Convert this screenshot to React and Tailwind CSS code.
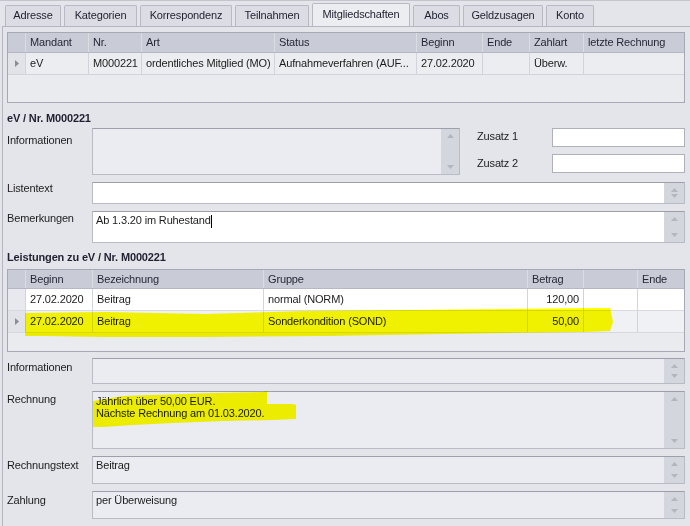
import React from "react";

const Up = () => (
  <svg width="7" height="4" viewBox="0 0 7 4"><path d="M3.5 0 L7 4 L0 4 Z" fill="#b4b6bf" /></svg>
);
const Down = () => (
  <svg width="7" height="4" viewBox="0 0 7 4"><path d="M0 0 L7 0 L3.5 4 Z" fill="#b4b6bf" /></svg>
);

function Scroll({ w = "w-[20px]" }) {
  return (
    <div className={`${w} shrink-0 bg-[#d4d6de] flex flex-col justify-between items-center py-[5px]`}>
      <Up />
      <Down />
    </div>
  );
}

function Box({ h, white, scroll = true, text, scrollW }) {
  return (
    <div
      className={`flex flex-1 border border-[#babcc5] border-t-[#9d9faa] ${h} ${white ? "bg-white" : "bg-[#ebecf1]"}`}
    >
      <div className="flex-1 pl-[3px] pt-[1px] text-[11px] leading-[13px] text-[#1c1c1c]">{text}</div>
      {scroll && <Scroll w={scrollW} />}
    </div>
  );
}

function Row({ label, labelPt, mt, children }) {
  return (
    <div className={`flex ${mt}`}>
      <div className={`w-[85px] shrink-0 ${labelPt} text-[11px] leading-[13px] text-[#1c1c1c]`}>{label}</div>
      {children}
    </div>
  );
}

const Arrow = () => (
  <svg width="4" height="7" viewBox="0 0 4 7"><path d="M0 0 L4 3.5 L0 7 Z" fill="#8a8c96" /></svg>
);

const tabs = [
  ["Adresse", "w-[56px]"],
  ["Kategorien", "w-[73px]"],
  ["Korrespondenz", "w-[92px]"],
  ["Teilnahmen", "w-[74px]"],
  ["Mitgliedschaften", "w-[98px]"],
  ["Abos", "w-[47px]"],
  ["Geldzusagen", "w-[80px]"],
  ["Konto", "w-[48px]"],
];

function Cell({ w, children, right, cls = "" }) {
  return (
    <div
      className={`${w} shrink-0 border-r border-[#d2d4db] px-[4px] overflow-hidden whitespace-nowrap flex items-center ${right ? "justify-end" : ""} ${cls}`}
    >
      {children}
    </div>
  );
}

export default function App() {
  return (
    <div className="w-[690px] h-[526px] bg-[#e4e5eb] overflow-hidden relative [font-family:'Liberation_Sans',Arial,sans-serif] text-[11px] tracking-[-0.15px] text-[#1c1c1c] border-t border-[#c3c5cc]">
      {/* Tabs */}
      <div className="flex items-end h-[25px] pl-[5px] gap-[3px]">
        {tabs.map(([t, w]) => {
          const active = t === "Mitgliedschaften";
          return (
            <div
              key={t}
              className={`${w} ${active ? "h-[23px] bg-[#ecedf1]" : "h-[21px] bg-[#dcdde4]"} border border-b-0 border-[#b8bac3] rounded-t-[2px] flex items-center justify-center text-[#1d1f2e] leading-none pb-[1px]`}
            >
              {t}
            </div>
          );
        })}
      </div>

      {/* Panel */}
      <div className="ml-[2px] border-l border-t border-[#b4b6c0] pl-[4px] pr-[5px] pt-[5px] h-[501px]">
        {/* Top grid */}
        <div className="h-[71px] border border-[#a6a8b3] bg-[#eaebef] flex flex-col">
          <div className="flex h-[20px] bg-[#c9cbd6] border-b border-[#b5b7c2] text-[#262838]">
            <Cell w="w-[18px]" cls="border-[#dcdde3]" />
            <Cell w="w-[63px]" cls="border-[#dcdde3]">Mandant</Cell>
            <Cell w="w-[53px]" cls="border-[#dcdde3]">Nr.</Cell>
            <Cell w="w-[133px]" cls="border-[#dcdde3]">Art</Cell>
            <Cell w="w-[142px]" cls="border-[#dcdde3]">Status</Cell>
            <Cell w="w-[66px]" cls="border-[#dcdde3]">Beginn</Cell>
            <Cell w="w-[47px]" cls="border-[#dcdde3]">Ende</Cell>
            <Cell w="w-[54px]" cls="border-[#dcdde3]">Zahlart</Cell>
            <div className="flex-1 px-[4px] flex items-center">letzte Rechnung</div>
          </div>
          <div className="flex h-[22px] bg-[#ecedf1] border-b border-[#d2d4db]">
            <Cell w="w-[18px]" cls="justify-center bg-[#e2e3e9]"><Arrow /></Cell>
            <Cell w="w-[63px]">eV</Cell>
            <Cell w="w-[53px]">M000221</Cell>
            <Cell w="w-[133px]">ordentliches Mitglied (MO)</Cell>
            <Cell w="w-[142px]">Aufnahmeverfahren (AUF...</Cell>
            <Cell w="w-[66px]">27.02.2020</Cell>
            <Cell w="w-[47px]" />
            <Cell w="w-[54px]">Überw.</Cell>
            <div className="flex-1" />
          </div>
        </div>

        {/* Section title */}
        <div className="mt-[7px] h-[16px] flex items-center font-bold text-[#1f2130]">eV / Nr. M000221</div>

        {/* Informationen + Zusatz */}
        <div className="flex mt-[2px]">
          <div className="w-[85px] shrink-0 pt-[4px]">Informationen</div>
          <div className="w-[368px] shrink-0 flex">
            <Box h="h-[47px]" scrollW="w-[18px]" />
          </div>
          <div className="flex-1 flex flex-col gap-[7px] pl-[17px]">
            <div className="flex h-[19px] items-center">
              <div className="w-[75px] shrink-0 pb-[3px]">Zusatz 1</div>
              <div className="flex-1 h-[19px] bg-white border border-[#aeb0ba]" />
            </div>
            <div className="flex h-[19px] items-center">
              <div className="w-[75px] shrink-0">Zusatz 2</div>
              <div className="flex-1 h-[19px] bg-white border border-[#aeb0ba]" />
            </div>
          </div>
        </div>

        <Row label="Listentext" labelPt="pt-[0px]" mt="mt-[7px]">
          <Box h="h-[22px]" white />
        </Row>
        <Row label="Bemerkungen" labelPt="pt-[1px]" mt="mt-[7px]">
          <Box
            h="h-[32px]"
            white
            text={
              <span className="inline-block pt-[1px]">
                Ab 1.3.20 im Ruhestand<span className="inline-block w-[1px] h-[13px] bg-black align-middle" />
              </span>
            }
          />
        </Row>

        <div className="mt-[6px] h-[16px] flex items-center font-bold text-[#1f2130]">Leistungen zu eV / Nr. M000221</div>

        {/* Lower grid */}
        <div className="relative mt-[4px] h-[83px] border border-[#a6a8b3] bg-[#eaebef] flex flex-col">
          <div className="flex h-[19px] bg-[#c9cbd6] border-b border-[#b5b7c2] text-[#262838]">
            <Cell w="w-[18px]" cls="border-[#dcdde3]" />
            <Cell w="w-[67px]" cls="border-[#dcdde3]">Beginn</Cell>
            <Cell w="w-[171px]" cls="border-[#dcdde3]">Bezeichnung</Cell>
            <Cell w="w-[264px]" cls="border-[#dcdde3]">Gruppe</Cell>
            <Cell w="w-[56px]" cls="border-[#dcdde3]">Betrag</Cell>
            <Cell w="w-[54px]" cls="border-[#dcdde3]" />
            <div className="flex-1 px-[4px] flex items-center">Ende</div>
          </div>
          <div className="flex h-[22px] bg-white border-b border-[#d8d9df]">
            <Cell w="w-[18px]" cls="bg-[#e8e9ee]" />
            <Cell w="w-[67px]">27.02.2020</Cell>
            <Cell w="w-[171px]">Beitrag</Cell>
            <Cell w="w-[264px]">normal (NORM)</Cell>
            <Cell w="w-[56px]" right>120,00</Cell>
            <Cell w="w-[54px]" />
            <div className="flex-1" />
          </div>
          <div className="flex h-[22px] bg-[#f0f1f4] border-b border-[#d8d9df]">
            <Cell w="w-[18px]" cls="justify-center bg-[#e2e3e9]"><Arrow /></Cell>
            <Cell w="w-[67px]">27.02.2020</Cell>
            <Cell w="w-[171px]">Beitrag</Cell>
            <Cell w="w-[264px]">Sonderkondition (SOND)</Cell>
            <Cell w="w-[56px]" right>50,00</Cell>
            <Cell w="w-[54px]" />
            <div className="flex-1" />
          </div>
          <svg
            className="absolute left-[17px] top-[38px] mix-blend-multiply pointer-events-none"
            width="590"
            height="31"
            viewBox="0 0 590 31"
          >
            <path
              d="M0 5 L80 4 L180 6 L280 3 L380 2 L480 1 L560 0 L585 -1 L588 14 L585 23 L560 24 L420 26 L300 28 L180 29 L80 29 L20 28 L0 28 Z"
              fill="#ffff00"
            />
          </svg>
        </div>

        <Row label="Informationen" labelPt="pt-[3px]" mt="mt-[6px]">
          <Box h="h-[26px]" />
        </Row>
        <div className="relative">
          <Row label="Rechnung" labelPt="pt-[2px]" mt="mt-[7px]">
            <Box
              h="h-[58px]"
              text={
                <span className="inline-block pt-[2px] leading-[12px]">
                  Jährlich über 50,00 EUR.
                  <br />
                  Nächste Rechnung am 01.03.2020.
                </span>
              }
            />
          </Row>
          <svg
            className="absolute left-[86px] top-[0px] mix-blend-multiply pointer-events-none"
            width="205"
            height="46"
            viewBox="0 0 205 46"
          >
            <path
              d="M0 10 L30 5 L60 4 L120 2 L170 1 L174 0 L174 13 L200 13 L203 14 L203 28 L180 29 L130 30 L80 32 L40 34 L10 36 L0 36 Z"
              fill="#ffff00"
            />
          </svg>
        </div>
        <Row label="Rechnungstext" labelPt="pt-[3px]" mt="mt-[7px]">
          <Box h="h-[28px]" text={<span className="inline-block pt-[1px]">Beitrag</span>} />
        </Row>
        <Row label="Zahlung" labelPt="pt-[3px]" mt="mt-[7px]">
          <Box h="h-[28px]" text={<span className="inline-block pt-[1px]">per Überweisung</span>} />
        </Row>
      </div>
    </div>
  );
}
